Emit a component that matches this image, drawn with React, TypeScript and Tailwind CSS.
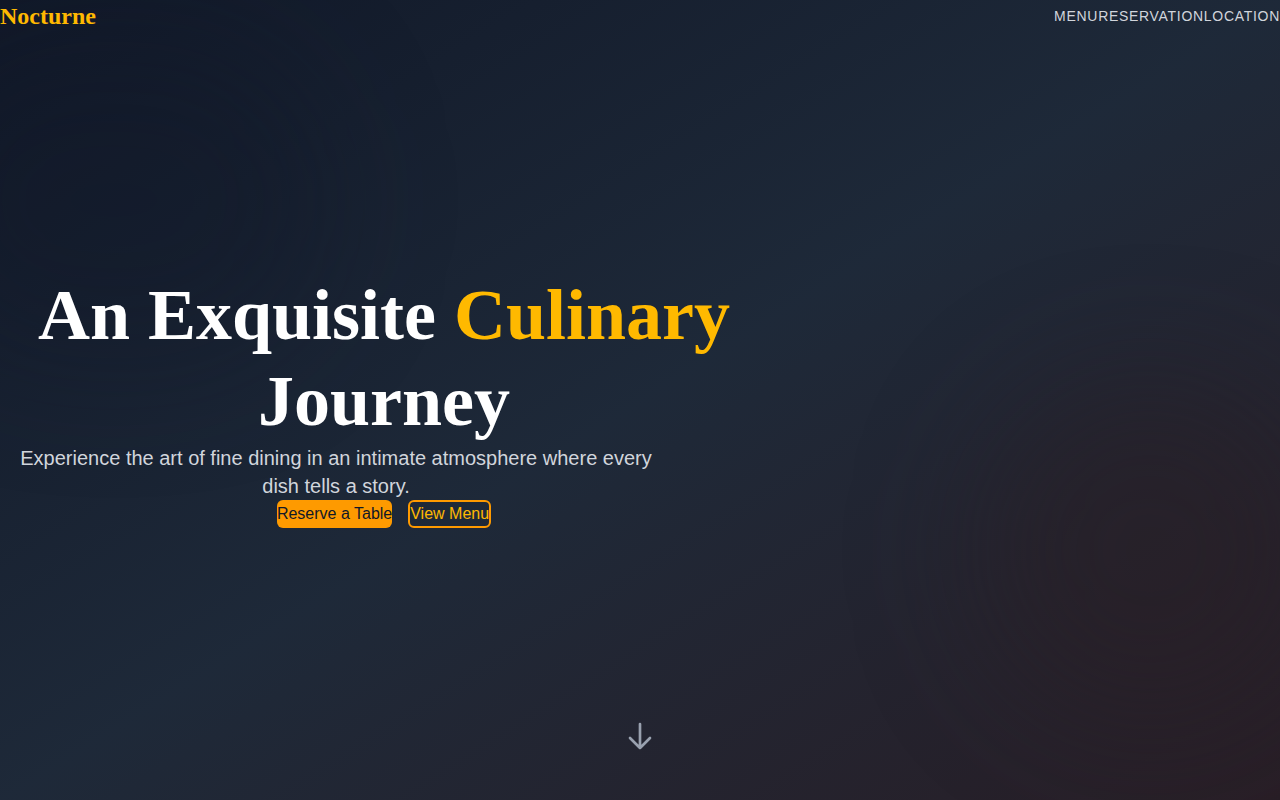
import React from 'react';

const ArrowDown: React.FC = () => (
  <svg viewBox="0 0 24 24" fill="none" stroke="currentColor" strokeWidth={2} className="w-8 h-8">
    <path strokeLinecap="round" strokeLinejoin="round" d="M19.5 13.5 12 21m0 0-7.5-7.5M12 21V3" />
  </svg>
);

export default function App() {
  const links = ['Menu', 'Reservation', 'Location'];

  return (
    <div className="relative min-h-screen overflow-hidden bg-gradient-to-br from-gray-900 via-gray-800 to-[#281e26] font-['Liberation_Sans',Arial,sans-serif]">
      {/* soft glows */}
      <div className="absolute -left-24 top-10 w-[420px] h-[320px] rounded-full bg-gray-900/30 blur-3xl" />
      <div className="absolute right-[-40px] bottom-[80px] w-[340px] h-[340px] rounded-full bg-[#2a1f22]/40 blur-3xl" />

      {/* Header */}
      <header className="absolute top-0 left-0 right-0 z-10 flex items-center justify-between h-8">
        <span className="font-['Liberation_Serif',serif] font-bold text-2xl text-amber-400">Nocturne</span>
        <nav className="flex text-sm uppercase tracking-wider text-gray-300">
          {links.map((l) => (
            <a key={l} href="#" className="hover:text-amber-400">{l}</a>
          ))}
        </nav>
      </header>

      {/* Hero */}
      <section className="relative flex items-center h-screen">
        <div className="w-full max-w-3xl">
          <h1 className="font-['Liberation_Serif',serif] font-bold text-7xl leading-[1.2] text-white text-center">
            An Exquisite <span className="text-amber-400">Culinary</span> Journey
          </h1>
          <p className="max-w-2xl text-xl text-gray-300 text-center">
            Experience the art of fine dining in an intimate atmosphere where every dish tells a story.
          </p>
          <div className="flex justify-center gap-4">
            <button className="py-0.5 bg-amber-500 text-gray-900 rounded-md">Reserve a Table</button>
            <button className="border-2 border-amber-500 text-amber-400 rounded-md">View Menu</button>
          </div>
        </div>
      </section>

      <div className="absolute bottom-12 left-1/2 -translate-x-1/2 text-gray-400">
        <ArrowDown />
      </div>
    </div>
  );
}
